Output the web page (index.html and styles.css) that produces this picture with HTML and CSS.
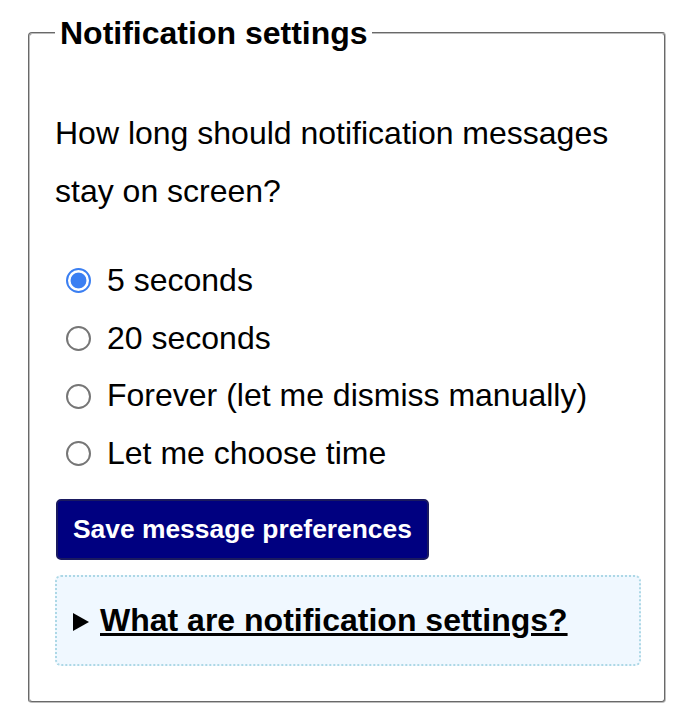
FILE: index.html
```html
<!DOCTYPE html>
<html lang="en">
<head>
<meta charset="utf-8">
<title>Notification settings</title>
<link rel="stylesheet" href="styles.css">
</head>
<body>
<form class="page">
  <fieldset class="settings">
    <legend class="settings__title">Notification settings</legend>
    <p class="settings__question">How long should notification messages stay on screen?</p>
    <div class="options">
      <label class="option"><input class="option__radio" type="radio" name="duration" value="5" checked><span>5 seconds</span></label>
      <label class="option"><input class="option__radio" type="radio" name="duration" value="20"><span>20 seconds</span></label>
      <label class="option"><input class="option__radio" type="radio" name="duration" value="forever"><span>Forever (let me dismiss manually)</span></label>
      <label class="option"><input class="option__radio" type="radio" name="duration" value="custom"><span>Let me choose time</span></label>
    </div>
    <button class="save" type="button">Save message preferences</button>
    <details class="help">
      <summary class="help__summary"><span class="help__marker"></span><span class="help__label">What are notification settings?</span></summary>
    </details>
  </fieldset>
</form>
</body>
</html>
```

FILE: styles.css
```css
html, body {
  margin: 0;
  padding: 0;
  background: #ffffff;
}

body {
  font-family: "Liberation Sans", Arial, Helvetica, sans-serif;
  font-size: 32px;
  line-height: 1.8;
  color: #000000;
}

.page {
  margin: 0;
  padding: 15px 26px 0 28px;
}

.settings {
  margin: 0;
  padding: 22px 23px 35px 25px;
  border: 2px groove #bdbdbd;
  border-radius: 4px;
  min-width: 0;
}

.settings__title {
  padding: 0 4px 0 5px;
  font-size: 32px;
  font-weight: bold;
  line-height: 36px;
}

.settings__question {
  margin: 32px 0;
}

.options {
  display: flex;
  flex-direction: column;
}

.option {
  display: flex;
  align-items: center;
  height: 57.6px;
}

.option__radio {
  appearance: none;
  -webkit-appearance: none;
  box-sizing: border-box;
  width: 25px;
  height: 25px;
  margin: 0 16px 0 11px;
  border: 2px solid #767676;
  border-radius: 50%;
  background: #ffffff;
  flex: none;
}

.option__radio:checked {
  border: 2px solid #3b7ff2;
  background: radial-gradient(circle, #3b7ff2 0, #3b7ff2 7.5px, #ffffff 8.3px);
}

.save {
  display: block;
  margin: 16px 0 0 1px;
  padding: 13px 15px 14px;
  border: 2px solid #1a1a60;
  border-radius: 5px;
  background: #000080;
  color: #ffffff;
  font-family: "Liberation Sans", Arial, Helvetica, sans-serif;
  font-size: 26.4px;
  font-weight: bold;
  line-height: 30px;
}

.help {
  margin-top: 15px;
  padding: 15px 16px;
  border: 2px dotted #add8e6;
  border-radius: 6px;
  background: #f0f8ff;
}

.help__summary {
  list-style: none;
  display: flex;
  align-items: center;
  font-weight: bold;
  line-height: 57.6px;
  cursor: pointer;
}

.help__summary::-webkit-details-marker {
  display: none;
}

.help__marker {
  width: 0;
  height: 0;
  margin: 3px 11px 0 0;
  border-left: 16px solid #000000;
  border-top: 9px solid transparent;
  border-bottom: 9px solid transparent;
  flex: none;
}

.help__label {
  text-decoration: underline;
}
```
